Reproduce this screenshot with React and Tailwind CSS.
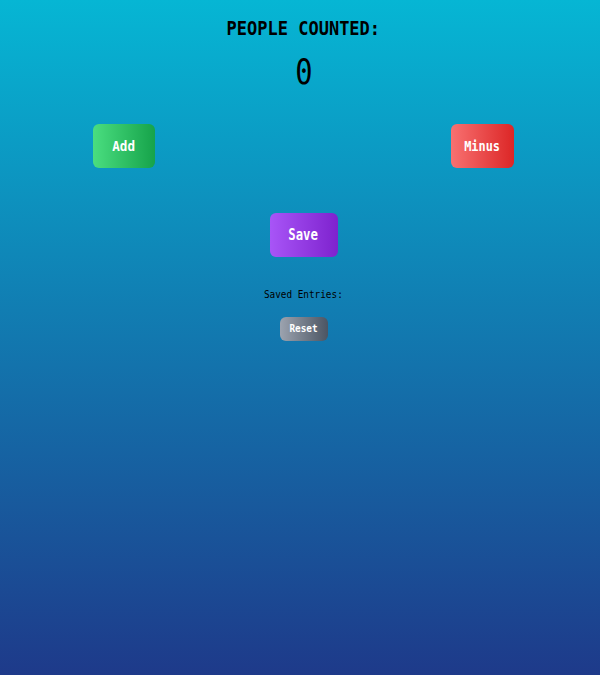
import React, { useState } from 'react'

export default function App() {
  const [count, setCount] = useState(0)
  const [entries, setEntries] = useState([])

  return (
    <div className="min-h-screen bg-linear-to-b/srgb from-[#06b6d4] to-[#1e3a8a] pl-[7px] font-['DejaVu_Sans_Mono',monospace] text-black">
      <div className="flex flex-col items-center pt-4">
        <h1 className="text-xl font-bold leading-6">
          <span className="inline-block scale-x-[0.85]">PEOPLE COUNTED:</span>
        </h1>
        <p className="mt-3 text-4xl leading-10">
          <span className="inline-block scale-x-[0.8]">{count}</span>
        </p>
      </div>

      <div className="mt-8 flex justify-between pl-[86px] pr-[86px]">
        <button
          onClick={() => setCount(count + 1)}
          className="h-11 w-[62px] rounded-md bg-linear-to-r/srgb from-[#4ade80] to-[#16a34a] text-sm font-bold text-white"
        >
          <span className="inline-block scale-x-[0.9]">Add</span>
        </button>
        <button
          onClick={() => setCount(Math.max(0, count - 1))}
          className="h-11 w-[63px] rounded-md bg-linear-to-r/srgb from-[#f87171] to-[#dc2626] text-sm font-bold text-white"
        >
          <span className="inline-block scale-x-[0.85]">Minus</span>
        </button>
      </div>

      <div className="mt-[45px] flex flex-col items-center">
        <button
          onClick={() => setEntries([...entries, count])}
          className="h-11 w-[68px] rounded-md bg-linear-to-r/srgb from-[#a855f7] to-[#7e22ce] text-[15px] font-bold text-white"
        >
          <span className="inline-block scale-x-[0.82]">Save</span>
        </button>
        <p className="mt-[30px] text-[11px] leading-4">
          <span className="inline-block scale-x-[0.85]">Saved Entries:</span>
        </p>
        {entries.map((e, i) => (
          <p key={i} className="text-[11px]">{e}</p>
        ))}
        <button
          onClick={() => {
            setEntries([])
            setCount(0)
          }}
          className="mt-[14px] h-6 w-12 rounded-md bg-linear-to-r/srgb from-[#9ca3af] to-[#4b5563] text-[11px] font-bold text-white"
        >
          <span className="inline-block scale-x-[0.85]">Reset</span>
        </button>
      </div>
    </div>
  )
}
